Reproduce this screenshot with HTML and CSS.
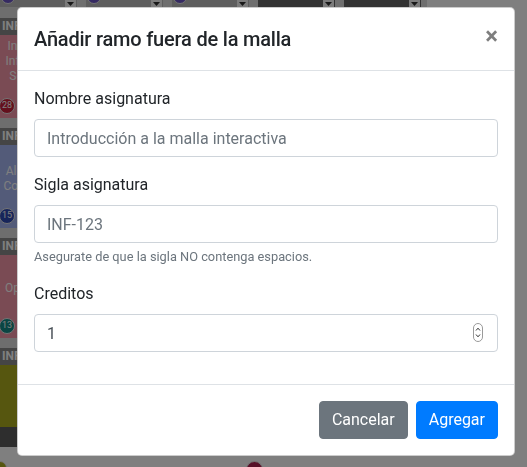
FILE: index.html
```html
<!DOCTYPE html>
<html lang="es">
<head>
    <meta charset="UTF-8">
    <meta name="viewport" content="width=device-width, initial-scale=1.0">
    <title>Malla interactiva</title>
    <link rel="stylesheet" href="styles.css">
</head>
<body>

    <!-- Malla de fondo (queda tapada por el modal) -->
    <div class="malla">
        <div class="fila-superior">
            <div class="pie"><span class="circulo morado"></span><span class="flecha"><svg width="7" height="4" viewBox="0 0 7 4"><path d="M0 0h7L3.5 4z" fill="#333"/></svg></span></div>
            <div class="pie"><span class="circulo morado"></span><span class="flecha"><svg width="7" height="4" viewBox="0 0 7 4"><path d="M0 0h7L3.5 4z" fill="#333"/></svg></span></div>
            <div class="pie"><span class="circulo morado"></span><span class="flecha"><svg width="7" height="4" viewBox="0 0 7 4"><path d="M0 0h7L3.5 4z" fill="#333"/></svg></span></div>
            <div class="pie oscuro"><span></span><span class="flecha"><svg width="7" height="4" viewBox="0 0 7 4"><path d="M0 0h7L3.5 4z" fill="#333"/></svg></span></div>
            <div class="pie oscuro"><span></span><span class="flecha"><svg width="7" height="4" viewBox="0 0 7 4"><path d="M0 0h7L3.5 4z" fill="#333"/></svg></span></div>
        </div>

        <div class="semestre">
            <div class="ramo">
                <div class="ramo-sigla">INF</div>
                <div class="ramo-nombre rosa largo">
                    <span>Int.<br>Info<br>Se</span>
                    <span class="circulo rojo">28</span>
                </div>
            </div>
            <div class="ramo">
                <div class="ramo-sigla">INF</div>
                <div class="ramo-nombre azul">
                    <span>Alg.<br>Com</span>
                    <span class="circulo azul-oscuro">15</span>
                </div>
            </div>
            <div class="ramo">
                <div class="ramo-sigla">INF</div>
                <div class="ramo-nombre rosa">
                    <span>Opt.</span>
                    <span class="circulo verde">13</span>
                </div>
            </div>
            <div class="ramo">
                <div class="ramo-sigla">INF</div>
                <div class="ramo-nombre oliva corto"></div>
                <div class="ramo-pie"></div>
            </div>
        </div>

        <div class="fila-inferior">
            <span class="circulo oliva-oscuro"></span>
            <span class="circulo granate"></span>
        </div>
    </div>

    <div class="fondo-modal"></div>

    <!-- Modal -->
    <div class="modal">
        <div class="modal-dialogo">
            <div class="modal-cabecera">
                <h5 class="modal-titulo">Añadir ramo fuera de la malla</h5>
                <button type="button" class="cerrar">&times;</button>
            </div>

            <div class="modal-cuerpo">
                <form id="formRamo">
                    <div class="grupo">
                        <label for="nombre">Nombre asignatura</label>
                        <input type="text" class="campo" id="nombre" placeholder="Introducción a la malla interactiva">
                    </div>

                    <div class="grupo">
                        <label for="sigla">Sigla asignatura</label>
                        <input type="text" class="campo" id="sigla" placeholder="INF-123">
                        <small class="ayuda">Asegurate de que la sigla NO contenga espacios.</small>
                    </div>

                    <div class="grupo">
                        <label for="creditos">Creditos</label>
                        <div class="campo-numero">
                            <input type="number" class="campo" id="creditos" value="1" min="1">
                            <span class="stepper">
                                <svg width="10" height="19" viewBox="0 0 10 19">
                                    <rect x="0.5" y="0.5" width="9" height="18" rx="4.5" fill="#fff" stroke="#9a9a9a"/>
                                    <path d="M3 7.5 5 5.2 7 7.5" fill="none" stroke="#333" stroke-width="1"/>
                                    <path d="M3 11.5 5 13.8 7 11.5" fill="none" stroke="#333" stroke-width="1"/>
                                </svg>
                            </span>
                        </div>
                    </div>
                </form>
            </div>

            <div class="modal-pie">
                <button type="button" class="btn btn-cancelar">Cancelar</button>
                <button type="button" class="btn btn-agregar">Agregar</button>
            </div>
        </div>
    </div>

</body>
</html>
```

FILE: styles.css
```css
* {
    box-sizing: border-box;
}

body {
    margin: 0;
    font-family: Roboto, "Liberation Sans", Arial, sans-serif;
    background-color: #fff;
    overflow: hidden;
    height: 467px;
}

/* ---------- malla de fondo ---------- */

.malla {
    width: 527px;
}

.fila-superior {
    display: flex;
    gap: 9px;
    height: 7px;
    background: #dedede;
    width: 427px;
}

.pie {
    width: 77px;
    height: 7px;
    background: #bcbcbc;
    display: flex;
    justify-content: space-between;
    align-items: flex-end;
    overflow: hidden;
}

.pie.oscuro {
    background: #666;
}

.pie .circulo {
    width: 14px;
    height: 14px;
    margin: 0 0 3px 1px;
}

.flecha {
    width: 11px;
    height: 7px;
    background: #f6f6f6;
    display: flex;
    justify-content: center;
    align-items: center;
    margin-right: 1px;
}

/* solo se ve la franja izquierda de la columna */
.semestre {
    width: 32px;
    padding-top: 11px;
    background: #dcdcdc;
}

.ramo {
    margin-bottom: 10px;
}

.ramo-sigla {
    height: 17px;
    background: #8a8a8a;
    color: #fff;
    font-size: 12px;
    font-weight: bold;
    line-height: 17px;
    padding-left: 2px;
}

.ramo-nombre {
    position: relative;
    height: 83px;
    padding-bottom: 16px;
    display: flex;
    flex-direction: column;
    justify-content: center;
    text-align: center;
    color: #fff;
    font-size: 12px;
    line-height: 15px;
    white-space: nowrap;
}

.ramo-nombre.largo {
    padding-bottom: 31px;
}

.ramo-nombre.corto {
    height: 62px;
}

.ramo-pie {
    height: 20px;
    background: #5c5c5c;
}

.rosa { background: #f596a8; }
.azul { background: #a6b6f2; }
.oliva { background: #acac1e; }

.circulo {
    display: inline-block;
    border-radius: 50%;
    border: 1.5px solid #e8e8e8;
    flex-shrink: 0;
}

.ramo-nombre .circulo {
    position: absolute;
    left: -1px;
    bottom: 4px;
    width: 16px;
    height: 16px;
    font-size: 9px;
    line-height: 13px;
    color: #fff;
    text-align: center;
}

.morado { background: #6a54c4; }
.rojo { background: #c8203a; }
.azul-oscuro { background: #2f4ab4; }
.verde { background: #148a86; }

.fila-inferior {
    display: flex;
    margin-top: 14px;
    height: 16px;
    overflow: hidden;
}

.fila-inferior .circulo {
    width: 14px;
    height: 14px;
}

.oliva-oscuro {
    background: #acac1e;
    margin-left: -7px;
}

.granate {
    background: #b02050;
    width: 17px !important;
    height: 17px !important;
    margin-left: 239px;
}

/* ---------- modal ---------- */

.fondo-modal {
    position: fixed;
    inset: 0;
    background: rgba(0, 0, 0, 0.5);
}

.modal {
    position: fixed;
    inset: 0;
}

.modal-dialogo {
    width: 498px;
    margin: 7px 0 0 17px;
    background: #fff;
    border: 1px solid rgba(0, 0, 0, 0.2);
    border-radius: 5px;
    color: #212529;
    font-size: 16px;
    line-height: 1.5;
}

.modal-cabecera {
    display: flex;
    align-items: flex-start;
    justify-content: space-between;
    padding: 16px;
    border-bottom: 1px solid #dee2e6;
}

.modal-titulo {
    margin: 0;
    font-size: 20px;
    font-weight: 500;
    line-height: 30px;
    letter-spacing: -0.2px;
}

.cerrar {
    background: none;
    border: none;
    padding: 16px;
    margin: -16px -16px -16px auto;
    font-family: inherit;
    font-size: 24px;
    font-weight: bold;
    line-height: 1;
    color: #000;
    opacity: 0.5;
    text-shadow: 0 1px 0 #fff;
    cursor: pointer;
}

.modal-cuerpo {
    padding: 16px;
}

.grupo {
    margin-bottom: 16px;
}

label {
    display: inline-block;
    margin-bottom: 8px;
}

.campo {
    display: block;
    width: 100%;
    height: 38px;
    padding: 6px 12px;
    font-family: inherit;
    font-size: 16px;
    line-height: 1.5;
    color: #495057;
    background: #fff;
    border: 1px solid #ced4da;
    border-radius: 4px;
}

.campo::placeholder {
    color: #6c757d;
}

.campo-numero {
    position: relative;
}

.campo-numero input::-webkit-inner-spin-button,
.campo-numero input::-webkit-outer-spin-button {
    -webkit-appearance: none;
    margin: 0;
}

.stepper {
    position: absolute;
    right: 15px;
    top: 9px;
    display: flex;
}

.ayuda {
    display: block;
    margin-top: 4px;
    font-size: 12.8px;
    line-height: 1.5;
    color: #6c757d;
}

.modal-pie {
    display: flex;
    justify-content: flex-end;
    align-items: center;
    padding: 12px;
    border-top: 1px solid #dee2e6;
}

.btn {
    margin: 4px;
    padding: 6px 12px;
    font-family: inherit;
    font-size: 16px;
    line-height: 1.5;
    color: #fff;
    border: 1px solid transparent;
    border-radius: 4px;
    cursor: pointer;
}

.btn-cancelar {
    background-color: #6c757d;
    border-color: #6c757d;
}

.btn-agregar {
    background-color: #007bff;
    border-color: #007bff;
}
```
